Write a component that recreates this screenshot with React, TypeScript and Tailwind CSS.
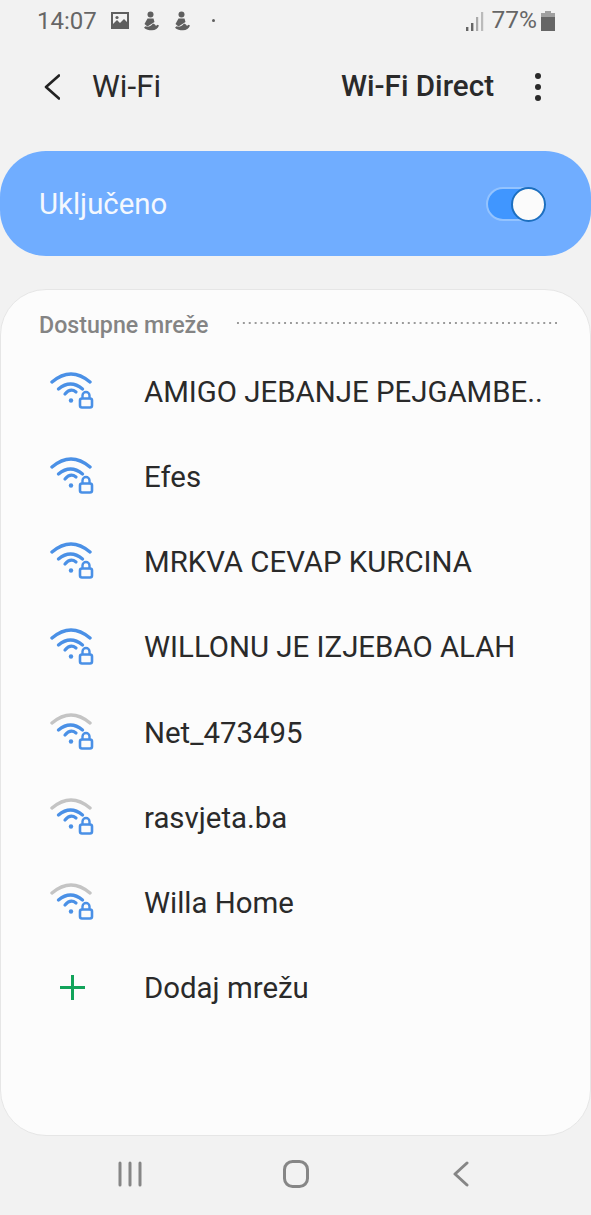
const font = { fontFamily: 'Roboto, sans-serif' };

function WifiLock({ weak }: { weak?: boolean }) {
  const blue = '#4a90e6';
  return (
    <svg className="-ml-[1px] -mt-[1px]" width="46" height="40" viewBox="0 0 46 40" fill="none" strokeLinecap="round" strokeLinejoin="round">
      <path d="M3 10Q22 -6 41 10" stroke={weak ? '#c4c4c4' : blue} strokeWidth="3.4" />
      <path d="M9.5 17Q21.5 7 33.5 17" stroke={blue} strokeWidth="3.4" />
      <path d="M16 22Q21.5 15.5 27 20" stroke={blue} strokeWidth="3.2" />
      <circle cx="22" cy="28.5" r="2.2" fill={blue} />
      <rect x="31" y="26.5" width="12" height="9" rx="2" stroke={blue} strokeWidth="2.6" />
      <path d="M33.5 26v-2.5a3 3 0 0 1 7 0V26" stroke={blue} strokeWidth="2.4" />
    </svg>
  );
}

function Figure({ className }: { className: string }) {
  return (
    <svg className={className} width="20" height="20" viewBox="0 0 20 20" fill="#5f5f5f">
      <circle cx="9.5" cy="3.6" r="3" />
      <path d="M6.5 7.5h6l1 3.5-7 4.5-3-2.5z" />
      <path d="M12 12.5l2 1c.4 1.6 1.4 1.4 2.4.2l1.6.8c-1 3.2-3.6 4.8-7 4.8-3.2 0-6-.8-8-2.6l1.5-1.4c2 .8 5 .6 7.5-2.8z" />
    </svg>
  );
}

const networks = [
  { name: 'AMIGO JEBANJE PEJGAMBE..' },
  { name: 'Efes' },
  { name: 'MRKVA CEVAP KURCINA' },
  { name: 'WILLONU JE IZJEBAO ALAH' },
  { name: 'Net_473495', weak: true },
  { name: 'rasvjeta.ba', weak: true },
  { name: 'Willa Home', weak: true },
];

export default function App() {
  return (
    <div className="w-[591px] h-[1215px] bg-[#f2f2f2] flex flex-col overflow-hidden" style={font}>
      {/* Status bar */}
      <div className="h-[41px] flex items-center pl-[37px] pr-[36px] text-[#666666] shrink-0">
        <span className="text-[24px] leading-none">14:07</span>
        <svg className="ml-[13px]" width="20" height="19" viewBox="0 0 20 19">
          <path fillRule="evenodd" fill="#5f5f5f" d="M1 1h18v17H1zM3 3v10l4-4 3 3 4-4 3 3V3z" />
          <circle cx="7" cy="6.5" r="1.6" fill="#5f5f5f" />
        </svg>
        <Figure className="ml-[11px]" />
        <Figure className="ml-[11px]" />
        <span className="ml-[20px] w-[3px] h-[3px] rounded-full bg-[#5f5f5f]" />
        <svg className="ml-auto" width="18" height="20" viewBox="0 0 18 20">
          <rect x="0" y="16" width="2.4" height="4" fill="#666666" />
          <rect x="5" y="12" width="2.4" height="8" fill="#666666" />
          <rect x="10" y="6" width="2.2" height="14" fill="#aaaaaa" />
          <rect x="15" y="1" width="2.2" height="19" fill="#bbbbbb" />
        </svg>
        <span className="ml-[8px] text-[24.5px] leading-none">77%</span>
        <svg className="ml-[4px]" width="14" height="20" viewBox="0 0 14 20">
          <rect x="4" y="0" width="6" height="3" fill="#a0a0a0" />
          <rect x="0" y="2" width="14" height="5" fill="#a0a0a0" />
          <rect x="0" y="6" width="14" height="14" fill="#666666" />
        </svg>
      </div>

      {/* App bar */}
      <div className="h-[92px] flex items-center pl-[44px] pr-[50px] shrink-0">
        <svg width="16" height="26" viewBox="0 0 16 26" fill="none" stroke="#222222" strokeWidth="2.6" strokeLinecap="round" strokeLinejoin="round">
          <path d="M15 1.5 2 13l13 11.5" />
        </svg>
        <span className="ml-[32px] text-[31.4px] leading-none text-[#2a2a2a]">Wi-Fi</span>
        <span className="ml-auto text-[29.6px] leading-none font-medium text-[#2a2a2a]">Wi-Fi Direct</span>
        <span className="ml-[41px] flex flex-col gap-[5px]">
          <span className="w-[6px] h-[6px] rounded-full bg-[#2a2a2a]" />
          <span className="w-[6px] h-[6px] rounded-full bg-[#2a2a2a]" />
          <span className="w-[6px] h-[6px] rounded-full bg-[#2a2a2a]" />
        </span>
      </div>

      <div className="h-[18px] shrink-0" />

      {/* Master switch */}
      <div className="h-[105px] shrink-0 rounded-[46px] bg-[#70adff] flex items-center pl-[39px] pr-[45px]">
        <span className="text-[29.4px] leading-none text-[#f4f8fe] pt-[2px]">Uključeno</span>
        <span className="ml-auto relative w-[60px] h-[34px] rounded-full bg-[#4096ff] border-2 border-[#93c3ff]">
          <span className="absolute right-[-2px] top-[-2px] w-[35px] h-[35px] rounded-full bg-[#fbfbfb] border-2 border-[#1c6fc0]" />
        </span>
      </div>

      <div className="h-[33px] shrink-0" />

      {/* Network list */}
      <div className="h-[847px] shrink-0 rounded-[46px] bg-[#fcfcfc] border border-[#e6e6e6] flex flex-col">
        <div className="flex items-center pl-[38px] pr-[33px] pt-[22px] h-[49px] shrink-0">
          <span className="text-[23.2px] leading-none font-medium text-[#848484]">Dostupne mreže</span>
          <span className="ml-[27px] mb-[5px] flex-1 h-[2px] bg-[radial-gradient(circle,#9a9a9a_1px,transparent_1px)] bg-[length:5.9px_2px]" />
        </div>
        <div className="flex flex-col pt-[11px]">
          {networks.map((n) => (
            <div key={n.name} className="h-[85.2px] flex items-center pl-[49px]">
              <WifiLock weak={n.weak} />
              <span className="ml-[49px] text-[29.4px] leading-none text-[#2a2a2a] whitespace-nowrap">{n.name}</span>
            </div>
          ))}
          <div className="h-[84px] flex items-center pl-[58px]">
            <svg className="-mt-[2px]" width="27" height="27" viewBox="0 0 27 27" stroke="#12a35a" strokeWidth="3">
              <path d="M13.5 1v25M1 13.5h25" />
            </svg>
            <span className="ml-[59px] -translate-x-[1px] text-[29.4px] leading-none text-[#2a2a2a]">Dodaj mrežu</span>
          </div>
        </div>
      </div>

      {/* Navigation bar */}
      <div className="flex-1 flex items-center justify-between pl-[118px] pr-[122px] pb-[3px]">
        <svg width="24" height="26" viewBox="0 0 24 26" stroke="#868686" strokeWidth="3" strokeLinecap="round">
          <path d="M2 2v22M12 2v22M22 2v22" />
        </svg>
        <svg className="mr-[3px]" width="26" height="28" viewBox="0 0 26 28" fill="none" stroke="#868686" strokeWidth="3">
          <rect x="1.5" y="1.5" width="23" height="25" rx="8" />
        </svg>
        <svg width="16" height="26" viewBox="0 0 16 26" fill="none" stroke="#868686" strokeWidth="3" strokeLinecap="round" strokeLinejoin="round">
          <path d="M14 2 2 13l12 11" />
        </svg>
      </div>
    </div>
  );
}
